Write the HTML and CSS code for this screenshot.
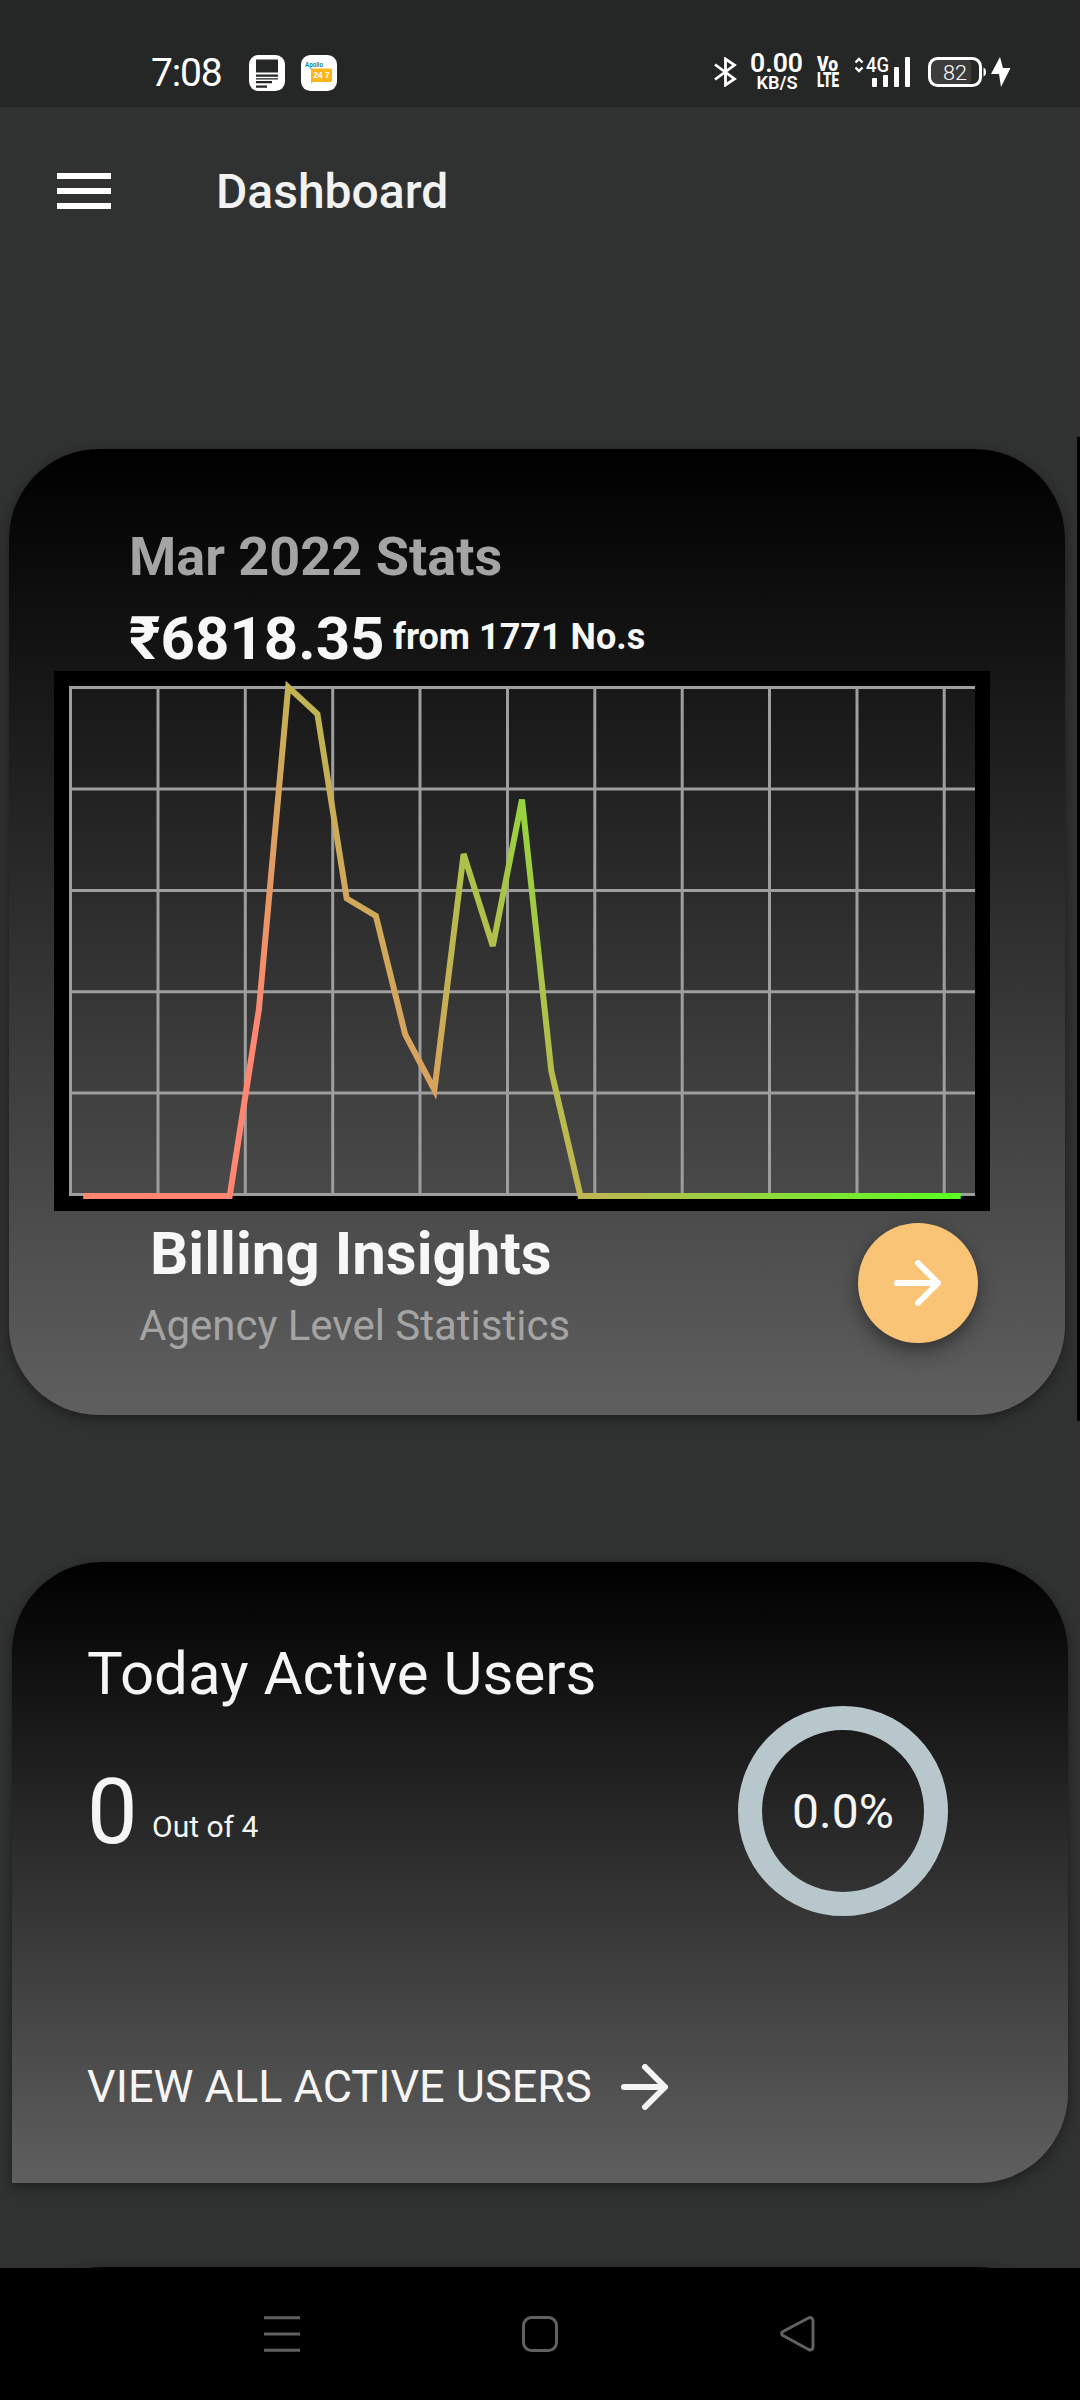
FILE: index.html
```html
<!DOCTYPE html>
<html lang="en">
<head>
<meta charset="utf-8">
<title>Dashboard</title>
<link rel="stylesheet" href="styles.css">
</head>
<body>
<div class="screen">
  <header class="status">
    <span class="clock">7:08</span>
    <svg class="app-icon" width="36" height="36" viewBox="0 0 36 36">
      <rect width="36" height="36" rx="9.5" fill="#fff"/>
      <path fill="#252726" d="M7 4.500h22v13H7zM7 19.500h22v2.200H7zM7 23.300h22v1.200H7zM7 26h16v2.200H7zM7 30.500h11v2.200H7z"/>
    </svg>
    <svg class="app-icon" width="36" height="36" viewBox="0 0 36 36">
      <rect width="36" height="36" rx="9.5" fill="#fff"/>
      <path fill="#fdb71a" d="M10 13.500h19.500q1.500 0 1.500 1.500v10.500q0 1.500-1.500 1.500H12l-2 2z"/>
      <text class="logo-name" x="4" y="12.300" textLength="18" lengthAdjust="spacingAndGlyphs">Apollo</text>
      <text class="logo-num" x="12.500" y="23" textLength="16" lengthAdjust="spacingAndGlyphs">24 7</text>
    </svg>
    <div class="status-right">
      <svg width="24" height="30" viewBox="0 0 24 30" fill="none" stroke="#fff" stroke-width="2.800"><path d="M1 7.500 20.500 22 11.500 28V2l9 6L1 22.500"/></svg>
      <svg class="speed" width="54" height="38" viewBox="0 0 54 38">
        <text class="speed-value" x="0" y="20" textLength="53" lengthAdjust="spacingAndGlyphs">0.00</text>
        <text class="speed-unit" x="6.500" y="36.500" textLength="41" lengthAdjust="spacingAndGlyphs">KB/S</text>
      </svg>
      <svg class="volte" width="23" height="34" viewBox="0 0 23 34">
        <text x="0" y="15" textLength="21" lengthAdjust="spacingAndGlyphs">Vo</text>
        <text x="0" y="31" textLength="22" lengthAdjust="spacingAndGlyphs">LTE</text>
      </svg>
      <svg class="signal" width="57" height="30" viewBox="0 0 57 30">
        <path d="M1.500 5.500 5 2l3.500 3.500M1.500 10.500 5 14l3.500-3.500" fill="none" stroke="#fff" stroke-width="2.400"/>
        <text class="net" x="12" y="15" textLength="23" lengthAdjust="spacingAndGlyphs">4G</text>
        <g fill="#fff"><rect x="18" y="21" width="5" height="9" rx="1"/><rect x="29" y="18" width="5" height="12" rx="1"/><rect x="40" y="10" width="5" height="20" rx="1"/><rect x="51" y="0" width="5" height="30" rx="1"/></g>
      </svg>
      <svg class="battery" width="83" height="30" viewBox="0 0 83 30">
        <rect x="3" y="3" width="40" height="24" rx="4" fill="#3b3c3b"/>
        <rect x="1.500" y="1.500" width="51" height="27" rx="8" fill="none" stroke="#fff" stroke-width="3"/>
        <path d="M55.500 10.500q2.500 1 2.500 4.500t-2.500 4.500z" fill="#fff"/>
        <path d="M72 0 63 17h8l2 13L82.500 11H75z" fill="#fff"/>
        <text class="charge" x="15" y="22.500" textLength="24" lengthAdjust="spacingAndGlyphs">82</text>
      </svg>
    </div>
  </header>

  <div class="appbar">
    <svg width="54" height="36" viewBox="0 0 54 36" fill="#fff"><path d="M0 0h54v6H0zM0 15h54v6H0zM0 30h54v6H0z"/></svg>
    <h1 class="title">Dashboard</h1>
  </div>

  <main class="content">
    <section class="card billing">
      <h2 class="month">Mar 2022 Stats</h2>
      <p class="amount"><span class="rupees">₹6818.35</span><span class="count">from 1771 No.s</span></p>
      <svg class="chart" width="936" height="540" viewBox="54 671 936 540">
        <defs>
          <linearGradient id="trend" gradientUnits="userSpaceOnUse" x1="401" y1="1294" x2="872" y2="1035">
            <stop offset="0" stop-color="#ff8670"/><stop offset="1" stop-color="#5aff22"/>
          </linearGradient>
        </defs>
        <path fill="#000" fill-rule="evenodd" d="M54 671h936v540H54zM69 686v510h906V686z"/>
        <path fill="none" stroke="#9e9e9e" stroke-width="3" d="M70.500 686v510M158 686v510M245.300 686v510M332.700 686v510M420 686v510M507.500 686v510M594.800 686v510M682.200 686v510M769.500 686v510M857 686v510M944.200 686v510M69 687.500h906M69 789h906M69 890.400h906M69 991.700h906M69 1093h906M69 1194.500h906"/>
        <polyline fill="none" stroke="url(#trend)" stroke-width="6" points="83.200,1196 229.700,1196 258.900,1009.500 288.200,687 317.400,714 346.700,898.500 375.900,916 405.200,1034.500 434.400,1090 463.600,854 492.800,946 522,799.500 551.300,1071 580.500,1196 960.700,1196"/>
      </svg>
      <div class="card-foot">
        <div class="foot-text">
          <h3 class="insights">Billing Insights</h3>
          <p class="agency">Agency Level Statistics</p>
        </div>
        <div class="fab">
          <svg width="48" height="46" viewBox="0 0 48 46" class="arrow"><path d="M3 23h41M24 3l20 20-20 20"/></svg>
        </div>
      </div>
    </section>

    <section class="card users">
      <div class="users-top">
        <div>
          <h2 class="users-title">Today Active Users</h2>
          <p class="active"><span class="active-num">0</span><span class="active-of">Out of 4</span></p>
        </div>
        <div class="ring">0.0%</div>
      </div>
      <div class="view-all"><span class="view-label">VIEW ALL ACTIVE USERS</span>
        <svg width="48" height="46" viewBox="0 0 48 46" class="arrow soft"><path d="M3 23h41M24 3l20 20-20 20"/></svg>
      </div>
    </section>

    <section class="card next"></section>
  </main>

  <nav class="navbar">
    <svg width="36" height="36" viewBox="0 0 36 36"><path d="M0 1.700h36M0 18h36M0 34.300h36"/></svg>
    <svg width="36" height="36" viewBox="0 0 36 36"><rect x="1.500" y="1.500" width="33" height="33" rx="8"/></svg>
    <svg width="36" height="36" viewBox="0 0 36 36"><path d="M28.500 2 3 15.500q-3 2 0 4L28.500 33.500q4 1.500 4.500-2.500V5q-.500-4.500-4.500-3z"/></svg>
  </nav>
  <div class="scrollbar"></div>
</div>
</body>
</html>
```

FILE: styles.css
```css
* { box-sizing: border-box; }
body { margin: 0; background: #fff; font-family: Roboto, "Liberation Sans", sans-serif; }
h1, h2, h3, p { margin: 0; }
svg { display: block; flex: none; }
span, h1, h2, h3, p { white-space: nowrap; }

.screen {
  position: relative;
  width: 1080px;
  height: 2400px;
  display: flex;
  flex-direction: column;
  overflow: hidden;
  background: #303231;
}

.status {
  flex: none;
  height: 107px;
  padding: 55px 69px 0 151px;
  display: flex;
  align-items: flex-start;
  background: #252726;
  color: #fff;
}
.clock { width: 98px; font-size: 39px; line-height: 36px; letter-spacing: -1.2px; }
.app-icon { margin-right: 16px; }
.logo-name { font: 700 7px "Liberation Sans", sans-serif; fill: #0e8499; }
.logo-num { font: 700 8.500px "Liberation Sans", sans-serif; fill: #fff; }
.status-right { margin-left: auto; padding-top: 2px; display: flex; align-items: flex-start; }
.speed { margin: -5px 0 0 12px; fill: #fff; }
.speed-value { font: 600 25px Roboto, sans-serif; }
.speed-unit { font: 600 18px Roboto, sans-serif; }
.volte { margin: -1px 0 0 13px; fill: #fff; font: 900 19.500px Roboto, sans-serif; }
.signal { margin-left: 14px; }
.battery { margin-left: 17px; }
.net { font: 500 21px Roboto, sans-serif; fill: #fff; }
.charge { font: 300 21px Roboto, sans-serif; fill: #fff; }

.appbar { flex: none; height: 168px; padding: 66px 57px 0; display: flex; align-items: flex-start; gap: 105px; }
.title { margin-top: -9px; font-size: 48px; font-weight: 500; line-height: 56px; color: #f2f2f2; }

.content { flex: none; height: 1993px; padding-top: 174px; display: flex; flex-direction: column; }
.card {
  flex: none;
  width: 1056px;
  border-radius: 90px;
  background: linear-gradient(#000, #5f5f5f);
  box-shadow: 0 3px 10px rgba(0, 0, 0, .28), 0 6px 14px rgba(0, 0, 0, .14);
}

.billing { height: 966px; margin-left: 9px; padding: 72px 0 0 45px; }
.month { margin-left: 75px; font-size: 54px; line-height: 72px; color: #a5a4a4; }
.amount { height: 78px; margin-left: 75px; display: flex; align-items: flex-start; color: #f7f7f7; font-weight: 700; }
.rupees { width: 264px; font-size: 60px; line-height: 92px; }
.count { font-size: 36px; line-height: 88px; }
.card-foot { display: flex; justify-content: space-between; padding: 7px 87px 0 85px; }
.insights { margin-left: 11px; font-size: 60px; line-height: 72px; color: #f7f7f7; }
.agency { font-size: 42px; line-height: 72px; color: #a5a4a4; }
.fab {
  width: 120px;
  height: 120px;
  margin-top: 5px;
  border-radius: 50%;
  display: flex;
  align-items: center;
  justify-content: center;
  background: #f9c476;
  box-shadow: 0 9px 20px rgba(0, 0, 0, .32), 0 4px 8px rgba(0, 0, 0, .12);
}
.arrow { fill: none; stroke: #fff; stroke-width: 6; stroke-linecap: round; stroke-linejoin: round; }
.soft { stroke: #f5f5f5; }

.users { height: 621px; margin: 147px 0 0 12px; padding: 76px 120px 0 75px; border-bottom-left-radius: 0; color: #f5f5f5; }
.users-top { height: 406px; display: flex; justify-content: space-between; }
.users-title { font-size: 60px; font-weight: 400; line-height: 72px; }
.active { display: flex; align-items: baseline; margin-top: 50px; }
.active-num { width: 65px; font-size: 90px; line-height: 106px; }
.active-of { font-size: 30px; line-height: 36px; position: relative; top: -6px; }
.ring {
  width: 210px;
  height: 210px;
  margin-top: 68px;
  border: 24px solid #b8c7cc;
  border-radius: 50%;
  font-size: 48px;
  line-height: 164px;
  text-align: center;
}
.view-all { display: flex; align-items: center; gap: 29px; font-size: 45px; line-height: 86px; }
.next { height: 300px; margin: 84px 0 0 12px; }

.navbar {
  position: absolute;
  left: 0;
  right: 0;
  bottom: 0;
  height: 132px;
  padding: 48px 264px 0;
  display: flex;
  justify-content: space-between;
  background: #000;
}
.navbar svg { fill: none; stroke: #616161; stroke-width: 3; }
.scrollbar { position: absolute; right: 0; top: 437px; width: 3px; height: 984px; background: #000; }
```
